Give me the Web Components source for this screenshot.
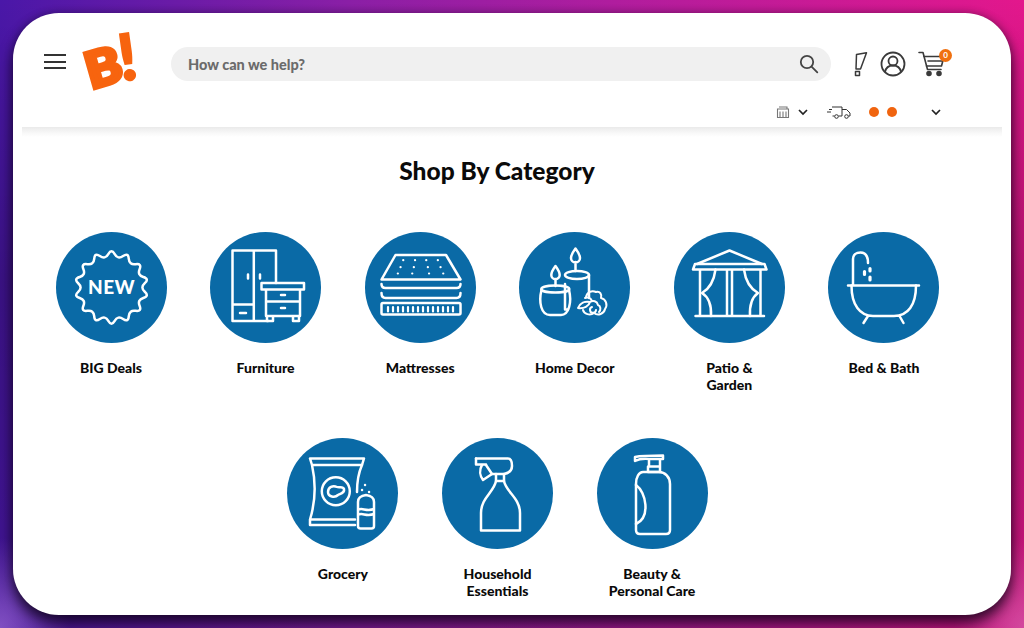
<!DOCTYPE html>
<html lang="en">
<head>
<meta charset="utf-8">
<title>Shop By Category</title>
<style>
  html, body { margin: 0; height: 628px; overflow: hidden; }
  body {
    font-family: Lato, "Liberation Sans", sans-serif;
    background:
      radial-gradient(70px 90px at 0 100%, rgba(150,100,210,.75), rgba(150,100,210,0)),
      radial-gradient(70px 90px at 100% 100%, rgba(215,90,170,.75), rgba(215,90,170,0)),
      linear-gradient(180deg, rgba(0,0,0,0) 0, rgba(0,0,0,.22) 45%, rgba(0,0,0,.12) 100%),
      linear-gradient(90deg, #4a17a8 0, #8a1fa6 34%, #b01d9e 60%, #e3178c 100%);
  }
</style>
</head>
<body>
<shop-card>
  <site-header></site-header>
  <category-section heading="Shop By Category">
    <category-tile icon="deal">BIG Deals</category-tile>
    <category-tile icon="furniture">Furniture</category-tile>
    <category-tile icon="mattress">Mattresses</category-tile>
    <category-tile icon="decor">Home Decor</category-tile>
    <category-tile icon="patio">Patio &amp; Garden</category-tile>
    <category-tile icon="bath">Bed &amp; Bath</category-tile>
    <category-tile icon="grocery">Grocery</category-tile>
    <category-tile icon="spray">Household Essentials</category-tile>
    <category-tile icon="pump">Beauty &amp; Personal Care</category-tile>
  </category-section>
</shop-card>

<script>
// wavy badge outline for the NEW icon
function badgePath(points, outer, inner) {
    const pts = [];
    for (let i = 0; i < points * 2; i++) {
        const r = i % 2 ? inner : outer;
        const a = Math.PI * i / points - Math.PI / 2;
        pts.push([55.5 + r * Math.cos(a), 55.5 + r * Math.sin(a)]);
    }
    const mid = (a, b) => [(a[0] + b[0]) / 2, (a[1] + b[1]) / 2];
    let start = mid(pts[pts.length - 1], pts[0]);
    let d = `M${start[0].toFixed(1)} ${start[1].toFixed(1)}`;
    pts.forEach((p, i) => {
        const m = mid(p, pts[(i + 1) % pts.length]);
        d += `Q${p[0].toFixed(1)} ${p[1].toFixed(1)} ${m[0].toFixed(1)} ${m[1].toFixed(1)}`;
    });
    return d + "Z";
}

const ICONS = {
    deal: `<path d="${badgePath(14, 39, 28.5)}"/>
        <text x="55.5" y="62" text-anchor="middle" font-family="Lato, sans-serif" font-weight="900" font-size="19" letter-spacing=".4" fill="#fff" stroke="none">NEW</text>`,
    furniture: `<path d="M58 89H22.5V18.5H66V51M43.8 18.5V89M22.5 72.5H43.8"/>
        <path d="M38 42.5v4M50 42.5v4M30 81h6"/>
        <path d="M51.5 51H94V57.5H51.5ZM56 57.5V84H90V57.5M56 69.5H90M71 63h4M71 76h4M57 84v5h6v-5M83 84v5h6v-5"/>`,
    mattress: `<path d="M16.5 47.5 30.5 23H81L95.5 47.5Z"/>
        <path d="M16.5 52q0 4 4 4H91.5q4 0 4-4M16.5 61q0 5 4 5H91.5q4 0 4-5"/>
        <path d="M18 71H94q1.500 0 1.500 1.500V81q0 1.500-1.500 1.500H18q-1.500 0-1.500-1.500V72.500q0-1.500 1.500-1.500Z"/>
        <path stroke-width="2.200" d="M23 75v4.500M28 75v4.500M33 75v4.500M38 75v4.500M43 75v4.500M48 75v4.500M53 75v4.500M58 75v4.500M63 75v4.500M68 75v4.500M73 75v4.500M78 75v4.500M83 75v4.500M88 75v4.500"/>
        <path stroke-width="2.200" d="M38.200 28.200h.1M50 28.200h.1M61.200 28.200h.1M72.800 28.200h.1M35.500 35.200h.1M48.800 35.200h.1M62.800 35.200h.1M75.500 35.200h.1M32.800 41.500h.1M47.200 41.500h.1M64 41.500h.1M78.200 41.500h.1"/>`,
    decor: `<path d="M46 52V77.500H49M70 43V66"/>
        <ellipse cx="58" cy="43" rx="12" ry="4"/>
        <path d="M56.500 16.500c-3 4-4.500 6.500-4.500 9.500a4.500 4.500 0 0 0 9 0c0-3-1.500-5.500-4.500-9.500ZM56.500 30v9"/>
        <path d="M36.500 34c-2.800 3.800-4.200 6-4.200 9a4.200 4.200 0 0 0 8.400 0c0-3-1.400-5.200-4.200-9ZM36.500 47v7"/>
        <path d="M22.500 58C19.500 70 22 83 31 83H42C50 83 53 70 50 58"/>
        <ellipse cx="36.300" cy="57" rx="14" ry="3.600"/>
        <path stroke-width="2" d="M67 65c1-5 6-7 10-5 4-1 6 2 5 6 5 1 7 7 4 11-1 5-7 7-11 4-4 3-10 1-11-3"/>
        <path stroke-width="2" d="M59 76c2-5 7-7 12-6-1 4-6 7-12 6ZM71 70c3-2 7-1 8 3 3 1 3 5 1 7M66 66c3-1 6 0 7 3M73 75a3 3 0 1 0 4 3"/>`,
    patio: `<path d="M23 32 55.500 18.500 88 32"/>
        <path d="M21 32H90.500L92.500 37.500H19ZM26 37.500V84M86.500 37.500V84M53 37.500V84M58 37.500V84M21.500 84H90"/>
        <path d="M41.500 37.500C40 49 35 57 28 61 36 66 37.500 75 37 84M70 37.500C71.500 49 77 57 84 61 77 66 75.500 75 76 84"/>`,
    bath: `<path d="M20 53.500H91M25 53.500V27C25 23 28 20.500 32.500 20.500S40 23 40 31"/>
        <path d="M23.500 53.500C23.500 73 32 84 45 84H66C80 84 88 73 88 53.500M40 84 35.500 91M71.500 84 75.500 91"/>
        <path stroke-width="3.200" d="M36.500 39.500v3M42 36.500v2.500M42 45v3"/>`,
    grocery: `<path d="M23 20.500H77L75 27H25ZM25 27C29 45 29 62 23 81.500H68M33 27H75M23 81.500 23 87H68"/>
        <path d="M75 27C71 36 70 45 70 54"/>
        <circle cx="48.800" cy="53.200" r="14"/>
        <path d="M41 54c0-5 5-7 9-5 2 1 6-1 7 2 1 4-4 5-6 6-3 3-10 2-10-3Z"/>
        <path d="M71 64q0-6 8-7 8 1 8 7V88q0 2.500-2.500 2.500H73.500Q71 90.500 71 88ZM71 72c4-3 8 2 16-1M71 77c4-3 8 2 16-1"/>
        <path stroke-width="2.400" d="M78 47h.1M75 52h.1M82 54h.1"/>`,
    spray: `<path d="M34 20.500H66C69 20.500 70 24 70 28 70 32 67 35 62 36H50L44 27"/>
        <path d="M34 20.500V26.500H44"/>
        <path d="M40 27C37 32 38 38 41 42L50 36M54 36V43M62 36V43M54 43H62"/>
        <path d="M54 43C52 54 39 60 39 75V92.500H78V75C78 60 64 54 62 43"/>`,
    pump: `<path d="M38 19C45 17.500 52 17.500 66 17.500V21H52C46 20.500 42 21 38 23ZM52 21V28.500M63 21V28.500M51 28.500H63V34H51Z"/>
        <path d="M46 34H62C68 34 73 39 73 46V92Q73 96 69 96H43Q39 96 39 92V46C39 39 42 34 46 34Z"/>
        <path d="M39 47C49 54 54 79 39 86"/>`
};

customElements.define("shop-card", class extends HTMLElement {
    constructor() {
        super();
        this.attachShadow({ mode: "open" }).innerHTML = `
            <style>
                :host {
                    display: block;
                    box-sizing: border-box;
                    position: relative;
                    top: 13px;
                    margin: 0 13px;
                    height: 602px;
                    background: #fff;
                    border-radius: 46px;
                    box-shadow: 0 9px 14px rgba(10,0,20,.72), 0 0 9px rgba(10,0,20,.32);
                }
            </style>
            <slot></slot>`;
    }
});

customElements.define("site-header", class extends HTMLElement {
    constructor() {
        super();
        this.attachShadow({ mode: "open" }).innerHTML = `
            <style>
                :host { display: block; height: 114px; color: #333; }
                .top { display: flex; align-items: flex-start; height: 72px; padding: 19px 0 0 31px; }
                .menu { width: 22px; height: 15px; margin-top: 22px; display: flex; flex-direction: column; justify-content: space-between; }
                .menu i { display: block; height: 2px; background: #333; }
                .logo { width: 54px; height: 58px; margin-left: 18px; position: relative; color: #f7640f; }
                .logo b { position: absolute; font-family: Lato, sans-serif; font-weight: 900; line-height: 1; }
                .logo .b { left: 1px; top: 9px; width: 36px; text-align: center; font-size: 50px; -webkit-text-stroke: 4px #f7640f; transform: rotate(-16deg) scaleX(1.08); }
                .logo .x { left: 34px; top: -8px; font-size: 64px; -webkit-text-stroke: 2px #f7640f; transform: rotate(-8deg); }
                .search {
                    width: 660px; height: 34px; margin: 15px 0 0 33px; box-sizing: border-box;
                    display: flex; align-items: center; justify-content: space-between;
                    padding: 0 12px 0 17px; background: #f0f0f0; border-radius: 17px;
                    color: #6b6b6b; font-size: 14.500px; font-weight: 900;
                }
                .actions { display: flex; align-items: center; margin: 18px 0 0 21px; }
                .actions svg { display: block; }
                .cart { position: relative; margin-left: 12px; height: 28px; }
                .count {
                    position: absolute; right: -1px; top: -1px; width: 13px; height: 13px; border-radius: 50%;
                    background: #f0700f; color: #fff; font-size: 8px; font-weight: 700; line-height: 13px; text-align: center;
                }
                .sub { display: flex; align-items: center; height: 16px; margin-top: 0; padding-left: 763px; }
                .dot { width: 10px; height: 10px; border-radius: 50%; background: #f0640f; }
            </style>
            <div class="top">
                <div class="menu"><i></i><i></i><i></i></div>
                <div class="logo"><b class="b">B</b><b class="x">!</b></div>
                <div class="search">
                    <span>How can we help?</span>
                    <svg width="20" height="20" viewBox="0 0 20 20" fill="none" stroke="#444" stroke-width="1.800" stroke-linecap="round"><circle cx="8" cy="8" r="6.200"/><path d="m12.800 12.800 5.500 5.500"/></svg>
                </div>
                <div class="actions">
                    <svg width="16" height="25" viewBox="0 0 16 25" fill="none" stroke="#3a3a3a" stroke-width="1.500" stroke-linejoin="round" style="margin-right:12px"><path d="M4.500 2.500 14.500 .8 8.500 17H4ZM3.500 19.500H7.500V23.500H3.500Z"/></svg>
                    <svg width="26" height="26" viewBox="0 0 26 26" fill="none" stroke="#3a3a3a" stroke-width="1.800"><circle cx="13" cy="13" r="11.500"/><circle cx="13" cy="10" r="4.500"/><path d="M5 21c1-5 4-6.500 8-6.500s7 1.500 8 6.500"/></svg>
                    <div class="cart">
                        <svg width="33" height="28" viewBox="0 0 33 28" fill="none" stroke="#3a3a3a" stroke-width="1.600" stroke-linejoin="round" stroke-linecap="round"><path d="M1 2.500H5L9.500 19.500H23"/><path d="M6 6.500H26L23.500 16H8.500M10 11H25"/><circle cx="11" cy="23.500" r="2" fill="#3a3a3a"/><circle cx="21" cy="23.500" r="2" fill="#3a3a3a"/></svg>
                        <span class="count">0</span>
                    </div>
                </div>
            </div>
            <div class="sub">
                <svg width="14" height="12" viewBox="0 0 14 12" fill="none" stroke="#777" stroke-width="1.100"><path d="M1.500 3H12.500V11.500H1.500ZM3 1H11V3M4 5.500V11.500M7 5.500V11.500M10 5.500V11.500"/></svg>
                <svg width="10" height="7" viewBox="0 0 10 7" fill="none" stroke="#222" stroke-width="1.700" style="margin-left:8px"><path d="m1 1 4 4 4-4"/></svg>
                <svg width="24" height="13" viewBox="0 0 24 13" fill="none" stroke="#333" stroke-width="1" style="margin-left:19px"><path d="M0 6H4M2 3.500H5M5 1H15V10H11.500M15 3.500H19.500L23 7V10H21.500M7.500 10H5.500"/><circle cx="9.500" cy="10.500" r="1.800"/><circle cx="19.500" cy="10.500" r="1.800"/></svg>
                <span class="dot" style="margin-left:18px"></span>
                <span class="dot" style="margin-left:8px"></span>
                <svg width="10" height="7" viewBox="0 0 10 7" fill="none" stroke="#222" stroke-width="1.700" style="margin-left:34px"><path d="m1 1 4 4 4-4"/></svg>
            </div>`;
    }
});

customElements.define("category-section", class extends HTMLElement {
    constructor() {
        super();
        this.attachShadow({ mode: "open" }).innerHTML = `
            <style>
                :host { display: block; }
                .fade { height: 10px; margin: 0 9px; background: linear-gradient(#eaeaea, #f8f8f8 60%, #fff); }
                h2 { margin: 17px 0 0; padding-left: 20px; width: 928px; height: 34px; font-size: 24.500px; line-height: 34px; font-weight: 900; color: #0a0a0a; text-align: center; }
                .grid { display: flex; flex-wrap: wrap; justify-content: center; width: 928px; margin: 44px 0 0 20.500px; }
            </style>
            <div class="fade"></div>
            <h2></h2>
            <div class="grid"><slot></slot></div>`;
        this.shadowRoot.querySelector("h2").textContent = this.getAttribute("heading");
    }
});

customElements.define("category-tile", class extends HTMLElement {
    constructor() {
        super();
        this.attachShadow({ mode: "open" }).innerHTML = `
            <style>
                :host { display: flex; flex-direction: column; align-items: center; width: 154.600px; height: 206px; color: #0a0a0a; }
                svg { display: block; width: 111px; height: 111px; }
                .label { width: 92px; margin-top: 15.500px; font-size: 14px; line-height: 17px; font-weight: 900; text-align: center; }
            </style>
            <svg viewBox="0 0 111 111" fill="none" stroke="#fff" stroke-width="2.500" stroke-linecap="round" stroke-linejoin="round">
                <circle cx="55.500" cy="55.500" r="55.500" fill="#0a6aa6" stroke="none"/>
                ${ICONS[this.getAttribute("icon")]}
            </svg>
            <div class="label"><slot></slot></div>`;
    }
});
</script>
</body>
</html>
